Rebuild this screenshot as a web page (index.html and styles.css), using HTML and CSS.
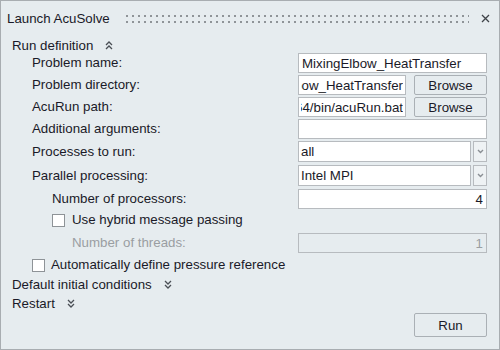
FILE: index.html
```html
<!DOCTYPE html>
<html lang="en">
<head>
    <meta charset="UTF-8">
    <title>Launch AcuSolve</title>
    <link rel="stylesheet" href="styles.css">
</head>
<body>
    <div class="dialog">
        <!-- Title bar -->
        <div class="titlebar">
            <span class="title">Launch AcuSolve</span>
            <div class="grip"></div>
            <svg class="close" width="9" height="9" viewBox="0 0 9 9">
                <path d="M1 1 L8 8 M8 1 L1 8" stroke="#3f4348" stroke-width="1.3" fill="none"/>
            </svg>
        </div>

        <!-- Run definition -->
        <div class="section-head">
            <span>Run definition</span>
            <svg class="chev" width="8" height="9" viewBox="0 0 8 9">
                <path d="M1 4 L4 1 L7 4 M1 8 L4 5 L7 8" stroke="#4a4f55" stroke-width="1.3" fill="none"/>
            </svg>
        </div>

        <div class="form">
            <label class="lbl" for="name">Problem name:</label>
            <input class="field" id="name" type="text" value="MixingElbow_HeatTransfer">

            <label class="lbl" for="dir">Problem directory:</label>
            <div class="with-btn">
                <input class="field clip" id="dir" type="text" dir="rtl" value="C:/Users/Public/Documents/MixingElbow_HeatTransfer">
                <button class="btn">Browse</button>
            </div>

            <label class="lbl" for="acurun">AcuRun path:</label>
            <div class="with-btn">
                <input class="field clip" id="acurun" type="text" dir="rtl" value="C:/Program Files/Altair/hwcfdsolvers/acusolve/win64/bin/acuRun.bat">
                <button class="btn">Browse</button>
            </div>

            <label class="lbl" for="args">Additional arguments:</label>
            <input class="field" id="args" type="text" value="">

            <label class="lbl tall">Processes to run:</label>
            <div class="combo">
                <div class="field sel">all</div>
                <div class="drop">
                    <svg width="7" height="5" viewBox="0 0 7 5"><path d="M1 1 L3.5 3.5 L6 1" stroke="#8a8f94" stroke-width="1.4" fill="none"/></svg>
                </div>
            </div>

            <label class="lbl tall">Parallel processing:</label>
            <div class="combo">
                <div class="field sel">Intel MPI</div>
                <div class="drop">
                    <svg width="7" height="5" viewBox="0 0 7 5"><path d="M1 1 L3.5 3.5 L6 1" stroke="#8a8f94" stroke-width="1.4" fill="none"/></svg>
                </div>
            </div>

            <label class="lbl sub" for="nproc">Number of processors:</label>
            <input class="field num" id="nproc" type="text" value="4">

            <label class="lbl sub check"><span class="box"></span>Use hybrid message passing</label>
            <div></div>

            <label class="lbl subsub disabled" for="nthreads">Number of threads:</label>
            <input class="field num off" id="nthreads" type="text" value="1" disabled>
        </div>

        <label class="auto check"><span class="box"></span>Automatically define pressure reference</label>

        <div class="section-head small">
            <span>Default initial conditions</span>
            <svg class="chev" width="8" height="9" viewBox="0 0 8 9">
                <path d="M1 1 L4 4 L7 1 M1 5 L4 8 L7 5" stroke="#4a4f55" stroke-width="1.3" fill="none"/>
            </svg>
        </div>
        <div class="section-head small">
            <span>Restart</span>
            <svg class="chev" width="8" height="9" viewBox="0 0 8 9">
                <path d="M1 1 L4 4 L7 1 M1 5 L4 8 L7 5" stroke="#4a4f55" stroke-width="1.3" fill="none"/>
            </svg>
        </div>

        <div class="footer">
            <button class="btn run">Run</button>
        </div>
    </div>
</body>
</html>
```

FILE: styles.css
```css
* {
    box-sizing: border-box;
}

body {
    margin: 0;
    font-family: "Liberation Sans", Arial, sans-serif;
    font-size: 13.3px;
    color: #1a1a28;
}

.dialog {
    width: 500px;
    height: 350px;
    background: #e6ecef;
    border: 1px solid #a8adb1;
    padding: 0 12px 0 11px;
}

/* title bar */
.titlebar {
    height: 35px;
    display: flex;
    align-items: center;
    margin-left: -5px;
}

.title {
    white-space: nowrap;
}

.grip {
    flex: 1;
    height: 8px;
    margin: 0 12px 0 16px;
    background-image: linear-gradient(90deg, #8f9498 2px, transparent 2px),
                      linear-gradient(90deg, #8f9498 2px, transparent 2px);
    background-size: 6px 2px;
    background-position: 0 0, 0 6px;
    background-repeat: repeat-x;
}

.close {
    margin-right: -3px;
}

/* collapsible headings */
.section-head {
    height: 16px;
    display: flex;
    align-items: center;
    margin-top: 1px;
}

.section-head.small {
    height: 19px;
    margin-top: 0;
}

.chev {
    margin-left: 12px;
}

/* form grid */
.form {
    display: grid;
    grid-template-columns: 1fr 189px;
    grid-template-rows: 22px 22px 22px 22px 24px 24px 22px 22px 22px;
    align-items: start;
    margin-left: 20px;
}

.lbl {
    line-height: 20px;
    white-space: nowrap;
}

.lbl.tall {
    line-height: 21px;
}

.lbl.sub {
    padding-left: 20px;
}

.lbl.subsub {
    padding-left: 40px;
}

.disabled {
    color: #9a9ea2;
}

.field {
    display: block;
    width: 100%;
    height: 20px;
    margin: 0;
    background: #fff;
    border: 1px solid #b7bbbf;
    border-radius: 0;
    padding: 0 3px;
    font-family: inherit;
    font-size: 13.3px;
    color: #1a1a28;
    line-height: 18px;
    white-space: nowrap;
    overflow: hidden;
    outline: none;
}

.field.clip {
    flex: 1;
    min-width: 0;
    padding: 0 2px;
}

.field.num {
    text-align: right;
}

.field.off {
    background: #e6ecef;
    color: #9a9ea2;
}

.with-btn {
    display: flex;
    gap: 8px;
}

.btn {
    flex: none;
    width: 73px;
    height: 20px;
    background: #e6ecef;
    border: 1px solid #aab0b5;
    border-radius: 2px;
    font-family: inherit;
    font-size: 13.3px;
    color: #1a1a28;
    padding: 0;
}

.combo {
    display: flex;
    gap: 2px;
}

.field.sel {
    flex: 1;
    height: 21px;
    line-height: 19px;
    padding: 0 2px;
}

.drop {
    width: 14px;
    height: 21px;
    border: 1px solid #b7bbbf;
    background: #eef2f4;
    display: flex;
    align-items: center;
    justify-content: center;
}

/* checkboxes */
.check {
    display: flex;
    align-items: center;
    gap: 7px;
    line-height: 18px;
}

.box {
    width: 13px;
    height: 13px;
    background: #fff;
    border: 1px solid #8e9397;
    flex: none;
}

.auto {
    height: 20px;
    margin-left: 20px;
    gap: 6px;
}

/* footer */
.footer {
    display: flex;
    justify-content: flex-end;
}

.btn.run {
    height: 24px;
}
```
